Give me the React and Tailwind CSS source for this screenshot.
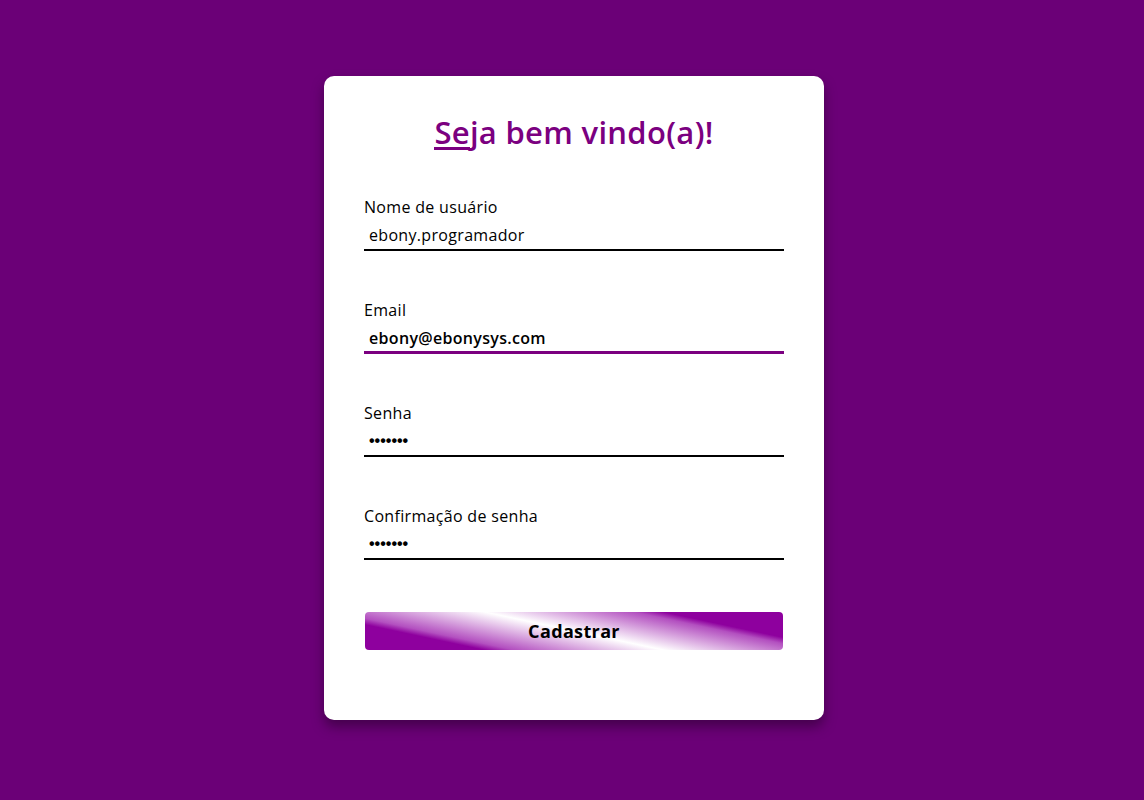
import { useState, useEffect, useRef } from 'react'

const fields = [
  { id: 'username', label: 'Nome de usuário', type: 'text', value: 'ebony.programador' },
  { id: 'email', label: 'Email', type: 'email', value: 'ebony@ebonysys.com', focused: true },
  { id: 'password', label: 'Senha', type: 'password', value: '1234567' },
  { id: 'confirm', label: 'Confirmação de senha', type: 'password', value: '1234567' }
]

export default function App() {
  const [values, setValues] = useState(
    Object.fromEntries(fields.map((f) => [f.id, f.value]))
  )
  const emailRef = useRef(null)

  useEffect(() => {
    // email field starts focused, caret at the end
    const el = emailRef.current
    if (el) {
      el.focus()
      const len = el.value.length
      try { el.setSelectionRange(len, len) } catch (e) {}
    }
  }, [])

  return (
    <div className="min-h-screen w-full bg-[#6b0077] flex justify-center pt-[76px] font-['Open_Sans','Noto_Sans',sans-serif]">
      <div className="ml-[4px] w-[500px] h-[644px] bg-white rounded-[10px] shadow-[0_7px_12px_rgba(45,0,50,0.6)] px-10 pt-[36px]">
        {/* Header */}
        <h1 className="text-center text-[31px] leading-[40px] font-semibold tracking-[0.01em] text-[#7b0080]">
          <span className="relative">
            Se
            <span className="absolute left-0 right-0 bottom-[3px] h-[3px] bg-[#7b0080]"></span>
          </span>
          ja bem vindo(a)!
        </h1>

        <form className="mt-[45px] flex flex-col gap-[49px]" onSubmit={(e) => e.preventDefault()}>
          {fields.map((f) => (
            <div key={f.id} className="flex flex-col">
              <label htmlFor={f.id} className="text-[16px] leading-[20px] text-black tracking-[0.02em]">
                {f.label}
              </label>
              <input
                id={f.id}
                ref={f.focused ? emailRef : undefined}
                type={f.type}
                value={values[f.id]}
                onChange={(e) => setValues({ ...values, [f.id]: e.target.value })}
                className={`mt-[4px] h-[30px] px-[5px] text-black outline-none bg-transparent caret-black ${
                  f.type === 'password'
                    ? "font-['Liberation_Sans',sans-serif] text-[16px] font-bold"
                    : 'text-[16px] tracking-[0.02em]'
                } ${
                  f.focused
                    ? 'border-b-[3px] border-[#7b0080] font-semibold'
                    : 'border-b-2 border-black'
                }`}
              />
            </div>
          ))}

          <button
            type="submit"
            className="mt-[3px] mx-[1px] h-[38px] rounded-[4px] text-[18px] font-bold text-black tracking-[0.02em] bg-[linear-gradient(12deg,#8e009e_0%,#8e009e_20%,#b350c0_25%,#ffffff_50%,#b350c0_75%,#8e009e_80%,#8e009e_100%)]"
          >
            Cadastrar
          </button>
        </form>
      </div>
    </div>
  )
}
